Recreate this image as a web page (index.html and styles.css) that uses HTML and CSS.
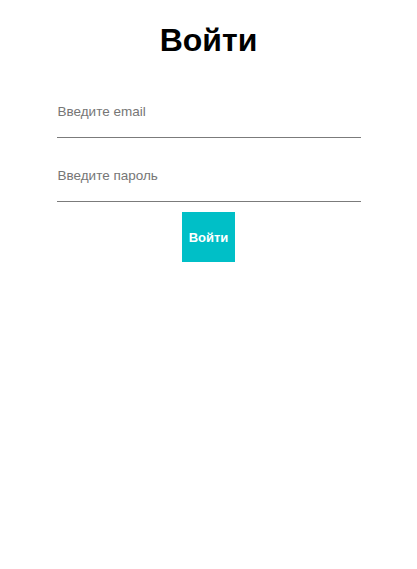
FILE: index.html
```html
<!DOCTYPE html>
<html lang="ru">
<head>
<meta charset="utf-8">
<title>Войти</title>
<link rel="stylesheet" href="styles.css">
</head>
<body>
<main class="login">
  <h1 class="login__title">Войти</h1>
  <form class="login__form">
    <input class="login__input" type="email" placeholder="Введите email">
    <input class="login__input" type="password" placeholder="Введите пароль">
    <button class="login__button" type="submit">Войти</button>
  </form>
</main>
</body>
</html>
```
FILE: styles.css
```css
html, body {
  margin: 0;
  padding: 0;
  background: #fff;
}
body {
  font-family: "Liberation Sans", Arial, sans-serif;
  color: #000;
}
.login {
  display: flex;
  flex-direction: column;
  align-items: center;
}
.login__title {
  margin: 22px 0 0;
  font-size: 32px;
  line-height: 37px;
  font-weight: 700;
}
.login__form {
  margin-top: 39px;
  width: 304px;
  display: flex;
  flex-direction: column;
  align-items: center;
  gap: 24px;
}
.login__input {
  width: 100%;
  height: 40px;
  box-sizing: border-box;
  padding: 0 1px 13px;
  border: 0;
  border-bottom: 1px solid #7b7b7b;
  font-family: inherit;
  font-size: 13.5px;
  outline: none;
  background: transparent;
}
.login__input::placeholder {
  color: #767676;
}
.login__button {
  margin-top: -14px;
  width: 53px;
  height: 50px;
  border: 0;
  padding: 0;
  background: #00bfc7;
  color: #fff;
  font-family: inherit;
  font-size: 13px;
  font-weight: 700;
}
```
